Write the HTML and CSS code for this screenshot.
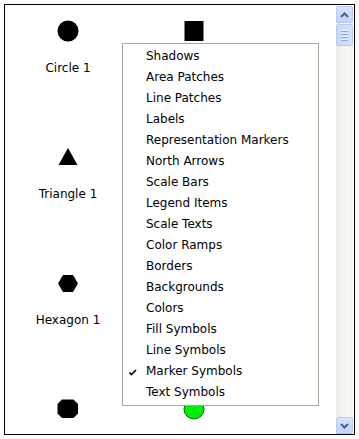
FILE: index.html
```html
<!DOCTYPE html>
<html>

<head>
    <title>Symbole</title>
    <meta charset="utf-8">
    <meta name="viewport" content="width=device-width, initial-scale=1.0">
    <link rel="stylesheet" href="styles.css">
</head>

<body>

    <div class="ramme">
        <section class="liste">
            <div class="celle">
                <svg class="symbol" width="22" height="22" viewBox="0 0 22 22">
                    <circle cx="11" cy="11" r="10.5" fill="#000" />
                </svg>
                <p>Circle 1</p>
            </div>
            <div class="celle">
                <svg class="symbol" width="22" height="22" viewBox="0 0 22 22">
                    <rect x="1.5" y="1" width="19" height="20" fill="#000" />
                </svg>
            </div>
            <div class="celle">
                <svg class="symbol" width="22" height="22" viewBox="0 0 22 22">
                    <polygon points="11,2 20.5,19 1.5,19" fill="#000" />
                </svg>
                <p>Triangle 1</p>
            </div>
            <div class="celle">
                <!-- skjult bag menuen -->
            </div>
            <div class="celle">
                <svg class="symbol" width="22" height="22" viewBox="0 0 22 22">
                    <polygon points="1,11.5 6,3 16,3 21,11.5 16,20 6,20" fill="#000" />
                </svg>
                <p>Hexagon 1</p>
            </div>
            <div class="celle">
                <!-- skjult bag menuen -->
            </div>
            <div class="celle">
                <svg class="symbol" width="22" height="22" viewBox="0 0 22 22">
                    <polygon points="5,1.5 16.5,1.5 21,6 21,15.5 16.5,20 5,20 0.5,15.5 0.5,6" fill="#000" />
                </svg>
            </div>
            <div class="celle">
                <svg class="symbol" width="22" height="22" viewBox="0 0 22 22">
                    <circle cx="11" cy="11" r="10" fill="#00ee00" stroke="#006400" stroke-width="1" />
                </svg>
            </div>
        </section>

        <div class="rullebar">
            <div class="knap">
                <svg width="9" height="6" viewBox="0 0 9 6">
                    <polyline points="1,5 4.5,1.5 8,5" fill="none" stroke="#4d6185" stroke-width="2" />
                </svg>
            </div>
            <div class="greb">
                <span></span><span></span><span></span><span></span>
            </div>
            <div class="spor"></div>
            <div class="knap">
                <svg width="9" height="6" viewBox="0 0 9 6">
                    <polyline points="1,1 4.5,4.5 8,1" fill="none" stroke="#4d6185" stroke-width="2" />
                </svg>
            </div>
        </div>

        <!-- genvejsmenu ligger over listen -->
        <ul class="menu">
            <li>Shadows</li>
            <li>Area Patches</li>
            <li>Line Patches</li>
            <li>Labels</li>
            <li>Representation Markers</li>
            <li>North Arrows</li>
            <li>Scale Bars</li>
            <li>Legend Items</li>
            <li>Scale Texts</li>
            <li>Color Ramps</li>
            <li>Borders</li>
            <li>Backgrounds</li>
            <li>Colors</li>
            <li>Fill Symbols</li>
            <li>Line Symbols</li>
            <li class="valgt">
                <svg class="flueben" width="8" height="7" viewBox="0 0 8 7">
                    <polyline points="0.5,3.5 2.5,5.5 7,1" fill="none" stroke="#000" stroke-width="1.6" />
                </svg>
                Marker Symbols
            </li>
            <li>Text Symbols</li>
        </ul>
    </div>

</body>

</html>
```

FILE: styles.css
```css
body {
    margin: 4px;
    background: #ffffff;
    font-family: "DejaVu Sans", sans-serif;
    font-size: 12px;
    color: #000000;
}

.ramme {
    position: relative;
    display: flex;
    height: 429px;
    border: 1px solid #000000;
    background: #ffffff;
    overflow: hidden;
}

.liste {
    flex: 1;
    display: grid;
    grid-template-columns: repeat(2, 126px);
    grid-auto-rows: 126px;
    align-content: start;
}

.celle {
    display: flex;
    flex-direction: column;
    align-items: center;
    padding-top: 15px;
}

.symbol {
    display: block;
}

.celle p {
    margin: 19px 0 0 0;
    line-height: 14px;
}

.rullebar {
    width: 17px;
    margin: 1px 1px 0 0;
    display: flex;
    flex-direction: column;
    background: linear-gradient(to right, #eeede5, #f9f8f4 70%, #f3f1ea);
}

.knap {
    height: 17px;
    box-sizing: border-box;
    border: 1px solid #b7c9f3;
    border-radius: 2px;
    background: linear-gradient(to bottom, #d9e4fd, #c1d2fb);
    display: flex;
    align-items: center;
    justify-content: center;
}

.greb {
    height: 22px;
    margin-top: 1px;
    box-sizing: border-box;
    border: 1px solid #b7c9f3;
    border-radius: 2px;
    background: linear-gradient(to right, #c9d8fc, #d4e0fd);
    display: flex;
    flex-direction: column;
    align-items: center;
    justify-content: center;
    gap: 1px;
}

.greb span {
    width: 7px;
    height: 1px;
    background: #eef3fe;
    border-bottom: 1px solid #8ca5e0;
}

.spor {
    flex: 1;
}

.menu {
    position: absolute;
    left: 117px;
    top: 38px;
    width: 195px;
    margin: 0;
    padding: 2px 0;
    list-style: none;
    background: #ffffff;
    border: 1px solid #aca899;
}

.menu li {
    position: relative;
    height: 21px;
    line-height: 21px;
    padding-left: 23px;
    white-space: nowrap;
}

.flueben {
    position: absolute;
    left: 6px;
    top: 8px;
}
```
